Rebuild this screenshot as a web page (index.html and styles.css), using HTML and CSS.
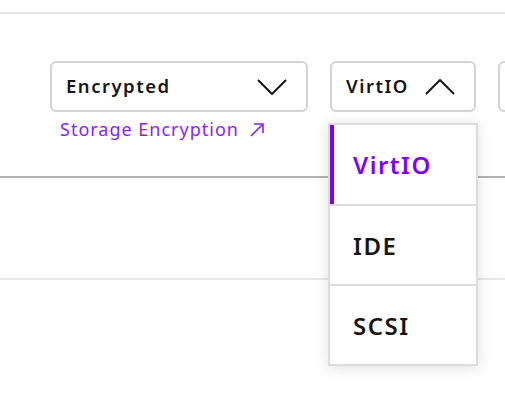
FILE: index.html
```
<!DOCTYPE html>
<html>
<head>
<meta charset="utf-8">
<link rel="stylesheet" href="styles.css">
</head>
<body>
<div class="page">
  <div class="rule rule-top"></div>
  <div class="fields">
    <div class="field">
      <div class="select select-wide">
        <span class="select-label">Encrypted</span>
        <svg class="chev" width="30" height="16" viewBox="0 0 30 16"><path d="M1 1 L15 15 L29 1" fill="none" stroke="#161616" stroke-width="2"/></svg>
      </div>
      <a class="link">Storage Encryption<svg class="arrow" width="16" height="16" viewBox="0 0 16 16"><path d="M2 14 L14 2 M5 2 L14 2 L14 11" fill="none" stroke="#8a1cff" stroke-width="1.6"/></svg></a>
    </div>
    <div class="field">
      <div class="select select-narrow">
        <span class="select-label">VirtIO</span>
        <svg class="chev" width="30" height="16" viewBox="0 0 30 16"><path d="M1 15 L15 1 L29 15" fill="none" stroke="#161616" stroke-width="2"/></svg>
      </div>
    </div>
    <div class="field">
      <div class="select select-cut"></div>
    </div>
  </div>
  <div class="rule rule-mid"></div>
  <div class="rule rule-low"></div>
  <ul class="menu">
    <li class="menu-item active">VirtIO</li>
    <li class="menu-item">IDE</li>
    <li class="menu-item">SCSI</li>
  </ul>
</div>
</body>
</html>
```
FILE: styles.css
```
* { box-sizing: border-box; }
html, body { margin: 0; padding: 0; background: #fff; }
body { font-family: "Noto Sans", "Open Sans", sans-serif; color: #161616; width: 505px; height: 403px; overflow: hidden; }
.page { position: relative; height: 403px; padding-top: 12px; overflow: hidden; }
.rule { height: 2px; }
.rule-top { background: #e6e6e6; }
.fields { display: flex; gap: 22px; padding-left: 50px; margin-top: 47px; height: 115px; overflow: hidden; }
.field { display: flex; flex-direction: column; flex-shrink: 0; }
.select { height: 51px; border: 2px solid #d4d4d4; border-radius: 6px; display: flex; align-items: center; justify-content: space-between; padding: 0 19px 0 14px; background: #fff; }
.select-wide { width: 258px; }
.select-narrow { width: 146px; padding-right: 19px; }
.select-cut { width: 60px; }
.select-label { font-size: 18.5px; font-weight: 600; letter-spacing: 1.5px; line-height: 1; }
.chev { display: block; }
.link { display: flex; align-items: center; margin-top: 5px; margin-left: 10px; color: #8a1cff; font-size: 18px; letter-spacing: 1px; line-height: 24px; text-decoration: none; }
.arrow { margin-left: 10px; margin-top: 2px; }
.rule-mid { background: #b3b3b3; }
.rule-low { margin-top: 100px; background: #e8e8e8; }
.menu { position: absolute; left: 328px; top: 123px; width: 150px; margin: 0; padding: 0; list-style: none; background: #fff; border: 2px solid #dcdcdc; box-shadow: 0 2px 14px rgba(0,0,0,0.12); }
.menu-item { height: 80px; display: flex; align-items: center; padding-left: 23px; font-size: 24px; font-weight: 600; letter-spacing: 1.5px; border-top: 2px solid #dcdcdc; }
.menu-item:first-child { border-top: 0; height: 79px; }
.menu-item.active { color: #8000ff; border-left: 4px solid #8000ff; padding-left: 19px; }
```
